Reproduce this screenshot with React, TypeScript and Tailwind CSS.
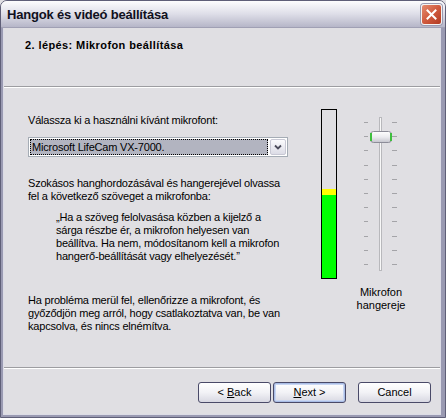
import React from "react";

const ticks = Array.from({ length: 11 }, (_, i) => 9 + i * 14.2);

function Slider() {
  return (
    <svg width="40" height="160" viewBox="0 0 40 160" className="block">
      <defs>
        <linearGradient id="thumb" x1="0" y1="0" x2="0" y2="1">
          <stop offset="0" stopColor="#ffffff" />
          <stop offset="0.5" stopColor="#ececf0" />
          <stop offset="1" stopColor="#c4c4cc" />
        </linearGradient>
      </defs>
      {ticks.map((y, i) => (
        <g key={i}>
          <rect x="3" y={Math.round(y)} width="4" height="1" fill="#a4a4a8" />
          <rect x="31" y={Math.round(y)} width="5" height="1" fill="#a4a4a8" />
        </g>
      ))}
      <rect x="18.5" y="4.5" width="2" height="153" fill="#f8f8f8" stroke="#b8b8bc" />
      <rect x="9.5" y="18.5" width="21" height="11" rx="3" fill="url(#thumb)" stroke="#8c8c98" />
      <rect x="9" y="20" width="2" height="8" fill="#3fbf3f" />
      <rect x="29" y="20" width="2" height="8" fill="#3fbf3f" />
    </svg>
  );
}

function XpButton({ children, def }: { children: React.ReactNode; def?: boolean }) {
  return (
    <div
      className={
        "w-[73px] h-[21px] rounded-[3px] border border-[#4a4a68] flex items-center justify-center bg-gradient-to-b from-[#ffffff] via-[#f2f2f6] to-[#d8d8e2] " +
        (def ? "shadow-[inset_0_0_0_1px_#a9bde6,inset_0_0_0_2px_#c9d6f2]" : "")
      }
    >
      <span className="leading-none">{children}</span>
    </div>
  );
}

export default function App() {
  return (
    <div className="w-[446px] h-[418px] bg-[#e0dfe3] font-['Liberation_Sans',Arial,sans-serif] text-[11px] text-black">
      <div className="w-full h-full flex flex-col rounded-t-[7px] border border-[#5f5f78] overflow-hidden">
        {/* Title bar */}
        <div className="h-[27px] shrink-0 flex items-center pl-[6px] pr-[3px] bg-gradient-to-b from-[#fdfdfe] via-[#dedee8] to-[#b6b6c8] border-b border-[#a0a0b4]">
          <span className="font-bold text-[13px] leading-none tracking-[-0.2px] text-[#101020]">
            Hangok és videó beállítása
          </span>
          <div className="ml-auto w-[21px] h-[21px] rounded-[3px] border border-[#f4f4f4] bg-gradient-to-br from-[#e58c70] via-[#d05a3e] to-[#b23a22] flex items-center justify-center shadow-[0_0_0_1px_#9a9ab0]">
            <svg width="11" height="11" viewBox="0 0 11 11">
              <path d="M1.5 1.5 L9.5 9.5 M9.5 1.5 L1.5 9.5" stroke="#ffffff" strokeWidth="2" strokeLinecap="square" />
            </svg>
          </div>
        </div>
        {/* Body with frame */}
        <div className="flex-1 flex flex-col border-l-[2px] border-r-[4px] border-b-[2px] border-[#9a9ab2]">
          <div className="flex-1 flex flex-col border-l border-r border-b border-[#dcdce6]">
            {/* Header */}
            <div className="h-[58px] shrink-0 pl-[21px] pt-[11px]">
              <div className="font-bold leading-[13px] tracking-[0.4px]">2. lépés: Mikrofon beállítása</div>
            </div>
            <div className="h-px bg-[#9d9da1]" />
            <div className="h-px bg-[#ffffff]" />
            {/* Main */}
            <div className="h-[279px] shrink-0 flex">
              <div className="w-[262px] ml-[24px] flex flex-col leading-[13px] tracking-[-0.2px]">
                <div className="mt-[26px]">Válassza ki a használni kívánt mikrofont:</div>
                <div className="mt-[10px] h-[20px] w-[260px] border border-[#a5acb5] bg-white flex items-center p-[1px]">
                  <div className="flex-1 h-full bg-[#b2b4c0] border border-dotted border-black flex items-center pl-[1px] mr-[2px]">
                    Microsoft LifeCam VX-7000.
                  </div>
                  <div className="w-[16px] h-full rounded-[2px] bg-gradient-to-b from-[#fbfbfd] to-[#dcdce6] border border-[#c8c8d4] flex items-center justify-center">
                    <svg width="8" height="6" viewBox="0 0 8 6">
                      <path d="M1 1.5 L4 4.5 L7 1.5" stroke="#4d4d5c" strokeWidth="1.8" fill="none" />
                    </svg>
                  </div>
                </div>
                <div className="mt-[20px] whitespace-nowrap">
                  Szokásos hanghordozásával és hangerejével olvassa
                  <br />
                  fel a következő szöveget a mikrofonba:
                </div>
                <div className="mt-[8px] ml-[28px] whitespace-nowrap">
                  „Ha a szöveg felolvasása közben a kijelző a
                  <br />
                  sárga részbe ér, a mikrofon helyesen van
                  <br />
                  beállítva. Ha nem, módosítanom kell a mikrofon
                  <br />
                  hangerő-beállítását vagy elhelyezését.”
                </div>
                <div className="mt-[31px] whitespace-nowrap">
                  Ha probléma merül fel, ellenőrizze a mikrofont, és
                  <br />
                  győződjön meg arról, hogy csatlakoztatva van, be van
                  <br />
                  kapcsolva, és nincs elnémítva.
                </div>
              </div>
              <div className="ml-[31px] mt-[21px] w-[16px] h-[170px] border border-black flex flex-col justify-end">
                <div className="h-[6px] bg-[#ffff00]" />
                <div className="h-[83px] bg-[#00ff00]" />
              </div>
              <div className="ml-[14px] w-[60px] flex flex-col items-center">
                <div className="mt-[25px]">
                  <Slider />
                </div>
                <div className="mt-[13px] text-center leading-[13px]">
                  Mikrofon
                  <br />
                  hangereje
                </div>
              </div>
            </div>
            <div className="h-px bg-[#9d9da1]" />
            <div className="h-px bg-[#ffffff]" />
            {/* Buttons */}
            <div className="flex-1 flex items-start justify-end pt-[13px] pr-[9px]">
              <XpButton>
                &lt; <span className="underline">B</span>ack
              </XpButton>
              <div className="ml-[2px]">
                <XpButton def>
                  <span className="underline">N</span>ext &gt;
                </XpButton>
              </div>
              <div className="ml-[12px]">
                <XpButton>Cancel</XpButton>
              </div>
            </div>
          </div>
        </div>
      </div>
    </div>
  );
}
